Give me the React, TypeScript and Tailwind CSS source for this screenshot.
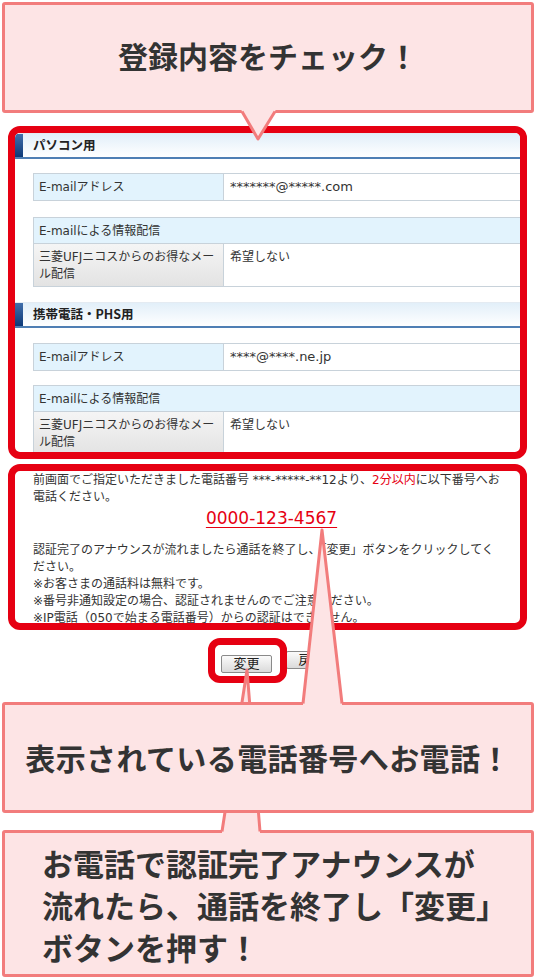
const SMALL = "font-['DejaVu_Sans','Noto_Sans_CJK_JP',sans-serif]";
const BIG = "font-['Noto_Sans_CJK_JP',sans-serif]";

function SectionHeader({ title }: { title: string }) {
  return (
    <div className="flex h-[26px] border-t border-t-[#e4ebf2] border-b-2 border-b-[#4f7fb4] bg-linear-to-b from-[#e2eff9] to-white">
      <div className="w-[8px] bg-linear-to-b from-[#416fab] to-[#0d3a78]" />
      <div className={`pl-[10px] flex items-center font-bold text-[12.5px] text-[#222] ${BIG}`}>{title}</div>
    </div>
  );
}

function EmailRow({ value }: { value: string }) {
  return (
    <div className="ml-[18px] w-[560px] flex h-[28px] border border-[#c8d2da]">
      <div className="w-[190px] shrink-0 bg-[#e2f3fd] border-r border-[#c8d2da] px-[5px] flex items-center text-[12px]">
        E-mailアドレス
      </div>
      <div className="px-[6px] flex items-center text-[13px] text-[#333]">{value}</div>
    </div>
  );
}

function InfoTable() {
  return (
    <div className="ml-[18px] w-[560px] border border-[#c8d2da]">
      <div className="h-[26px] bg-[#e2f3fd] border-b border-[#c8d2da] px-[5px] flex items-center text-[12px]">
        E-mailによる情報配信
      </div>
      <div className="flex h-[42px]">
        <div className="w-[190px] shrink-0 bg-linear-to-b from-[#f5f5f5] to-[#e3e3e3] border-r border-[#c8d2da] px-[5px] pt-[5px] text-[12px] leading-[17px]">
          三菱UFJニコスからのお得なメール配信
        </div>
        <div className="px-[6px] pt-[4px] text-[12px]">希望しない</div>
      </div>
    </div>
  );
}

export default function App() {
  return (
    <div className={`relative w-[536px] h-[980px] bg-white overflow-hidden text-[#333] ${SMALL}`}>
      {/* callout 1 */}
      <div className="mx-[2px] mt-[2px] h-[111px] border-[3px] border-[#f27c7c] bg-[#fde4e5] rounded-[3px] flex items-center justify-center pb-[5px]">
        <span className={`text-[30px] font-bold text-[#333] ${BIG}`}>登録内容をチェック！</span>
      </div>

      {/* frame 1: registration details */}
      <div className="mt-[13px] ml-[8px] w-[519px] h-[333px] border-[7px] border-[#e60012] rounded-[12px] overflow-hidden bg-white">
        <SectionHeader title="パソコン用" />
        <div className="mt-[14px]">
          <EmailRow value="*******@*****.com" />
        </div>
        <div className="mt-[16px]">
          <InfoTable />
        </div>
        <div className="mt-[15px]">
          <SectionHeader title="携帯電話・PHS用" />
        </div>
        <div className="mt-[15px]">
          <EmailRow value="****@****.ne.jp" />
        </div>
        <div className="mt-[14px]">
          <InfoTable />
        </div>
      </div>

      {/* frame 2: phone number */}
      <div className="mt-[5px] ml-[8px] w-[519px] h-[166px] border-[7px] border-[#e60012] rounded-[12px] overflow-hidden bg-white pl-[18px] pt-[1px] text-[12px] leading-[17px] whitespace-nowrap">
        <div>
          前画面でご指定いただきました電話番号 ***-*****-**12より、<span className="text-[#e60012]">2分以内</span>に以下番号へお
        </div>
        <div>電話ください。</div>
        <div className="pr-[10px] text-center text-[17px] leading-[24px] text-[#e60012] font-['DejaVu_Sans',sans-serif]">
          <span className="underline underline-offset-[3px]">0000-123-4567</span>
        </div>
        <div className="mt-[12px]">認証完了のアナウンスが流れましたら通話を終了し、「変更」ボタンをクリックしてく</div>
        <div>ださい。</div>
        <div>※お客さまの通話料は無料です。</div>
        <div>※番号非通知設定の場合、認証されませんのでご注意ください。</div>
        <div>※IP電話（050で始まる電話番号）からの認証はできません。</div>
      </div>

      {/* buttons */}
      <div className="h-[72px] pt-[21px] pl-[221px] flex items-start gap-[14px]">
        <div className="relative">
          <div className="absolute left-[-13px] top-[-13px] w-[79px] h-[45px] border-[7px] border-[#e60012] rounded-[12px]" />
          <button className="relative w-[51px] h-[18px] border border-[#8a8a8a] rounded-[2px] bg-linear-to-b from-[#fbfbfb] to-[#dadada] text-[13px] leading-[16px] text-[#222]">
            変更
          </button>
        </div>
        <button className="w-[51px] h-[18px] border border-[#8a8a8a] rounded-[2px] bg-linear-to-b from-[#fbfbfb] to-[#dadada] text-[13px] leading-[16px] text-[#222]">
          戻る
        </button>
      </div>

      {/* callout 2 */}
      <div className="relative z-20 mx-[2px] h-[111px] border-[3px] border-[#f27c7c] bg-[#fde4e5] rounded-[3px] flex items-center justify-center">
        <span className={`text-[30px] font-bold text-[#333] tracking-[0.4px] ${BIG}`}>表示されている電話番号へお電話！</span>
      </div>

      {/* callout 3 */}
      <div className="mt-[17px] mx-[2px] h-[147px] border-[3px] border-[#f27c7c] bg-[#fde4e5] rounded-[3px] pl-[37px] pt-[9px]">
        <div className={`text-[31px] leading-[42px] font-bold text-[#333] ${BIG}`}>
          <div>お電話で認証完了アナウンスが</div>
          <div>流れたら、通話を終了し「変更」</div>
          <div>ボタンを押す！</div>
        </div>
      </div>

      {/* pointer from callout 3 up to the 変更 button (under callout 2) */}
      <svg className="absolute inset-0 z-10 pointer-events-none" width="536" height="980" viewBox="0 0 536 980">
        <polygon points="222,834 222,831.5 247,670 260,831.5 260,834" fill="#fde4e5" />
        <polyline points="222,831.5 247,670 260,831.5" fill="none" stroke="#f27c7c" strokeWidth="3" strokeLinejoin="round" />
      </svg>

      {/* pointers over everything */}
      <svg className="absolute inset-0 z-30 pointer-events-none" width="536" height="980" viewBox="0 0 536 980">
        <polygon points="241,109 276,109 275,111.5 258,139 242,111.5" fill="#fde4e5" />
        <polyline points="242,111.5 258,139 275,111.5" fill="none" stroke="#f27c7c" strokeWidth="3" strokeLinejoin="round" />
        <polygon points="303,707 303,703.5 322,530 342,703.5 342,707" fill="#fde4e5" />
        <polyline points="303,703.5 322,530 342,703.5" fill="none" stroke="#f27c7c" strokeWidth="3" strokeLinejoin="round" />
      </svg>
    </div>
  );
}
